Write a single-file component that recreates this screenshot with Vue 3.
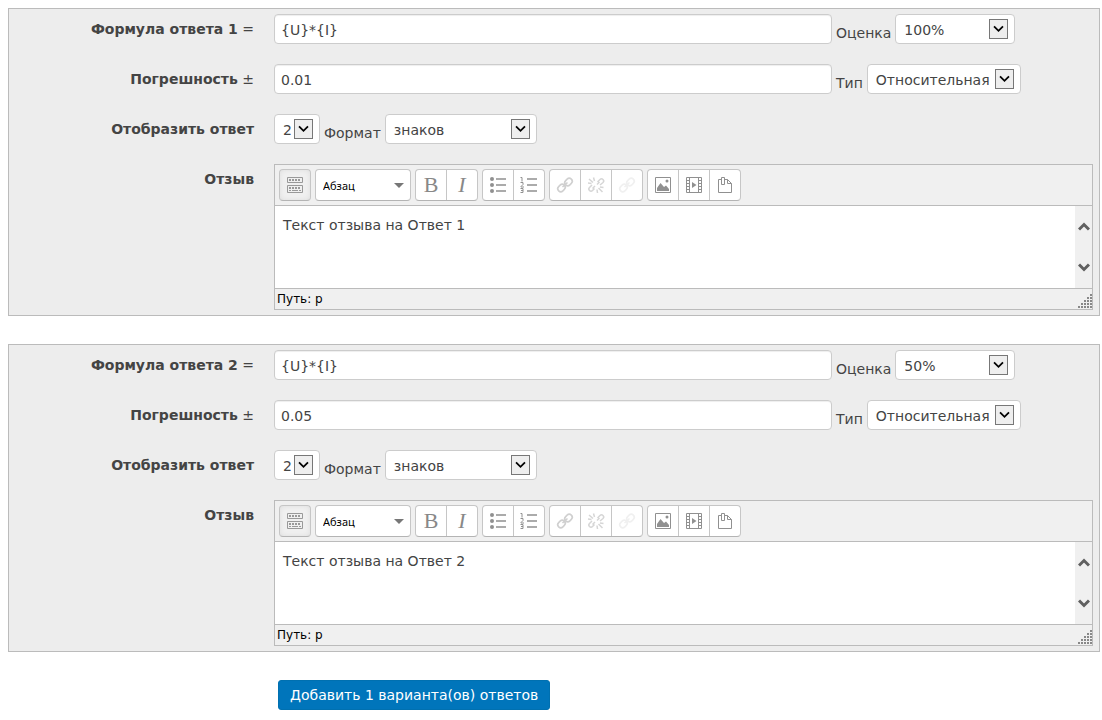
<script setup>
import { reactive } from 'vue'

const answers = reactive([
  { id: 1, formula: '{U}*{I}', grade: '100%', tolerance: '0.01', type: 'Относительная', digits: '2', format: 'знаков', feedback: 'Текст отзыва на Ответ 1' },
  { id: 2, formula: '{U}*{I}', grade: '50%', tolerance: '0.05', type: 'Относительная', digits: '2', format: 'знаков', feedback: 'Текст отзыва на Ответ 2' },
])

const groups = [
  [{ icon: 'bold', title: 'Полужирный' }, { icon: 'italic', title: 'Курсив' }],
  [{ icon: 'bullets', title: 'Маркированный список' }, { icon: 'numbers', title: 'Нумерованный список' }],
  [
    { icon: 'link', title: 'Вставить ссылку', disabled: true },
    { icon: 'unlink', title: 'Удалить ссылку', disabled: true },
    { icon: 'nolink', title: 'Отменить автоссылку', disabled: true },
  ],
  [{ icon: 'image', title: 'Изображение' }, { icon: 'media', title: 'Медиа' }, { icon: 'files', title: 'Файлы' }],
]

function addAnswer() {
  const id = answers.length + 1
  answers.push({ ...answers[0], id, formula: '', feedback: '' })
}
</script>

<template>
  <form class="page" @submit.prevent>
    <section v-for="a in answers" :key="a.id" class="answer">
      <div class="row">
        <label class="name" :for="'formula' + a.id"><b>Формула ответа {{ a.id }}</b> =</label>
        <div class="fields">
          <input :id="'formula' + a.id" v-model="a.formula" class="text" type="text" />
          <label class="side" :for="'grade' + a.id">Оценка</label>
          <span class="drop grade">
            <select :id="'grade' + a.id" v-model="a.grade"><option>100%</option><option>50%</option></select>
            <svg class="arrow" viewBox="0 0 19 20"><path d="M4.5 7 9.5 12 14.5 7" /></svg>
          </span>
        </div>
      </div>
      <div class="row">
        <label class="name" :for="'tolerance' + a.id"><b>Погрешность</b> ±</label>
        <div class="fields">
          <input :id="'tolerance' + a.id" v-model="a.tolerance" class="text" type="text" />
          <label class="side" :for="'type' + a.id">Тип</label>
          <span class="drop type">
            <select :id="'type' + a.id" v-model="a.type"><option>Относительная</option></select>
            <svg class="arrow" viewBox="0 0 19 20"><path d="M4.5 7 9.5 12 14.5 7" /></svg>
          </span>
        </div>
      </div>
      <div class="row">
        <label class="name" :for="'digits' + a.id"><b>Отобразить ответ</b></label>
        <div class="fields">
          <span class="drop digits">
            <select :id="'digits' + a.id" v-model="a.digits"><option>2</option></select>
            <svg class="arrow" viewBox="0 0 19 20"><path d="M4.5 7 9.5 12 14.5 7" /></svg>
          </span>
          <label class="side" :for="'format' + a.id">Формат</label>
          <span class="drop format">
            <select :id="'format' + a.id" v-model="a.format"><option>знаков</option></select>
            <svg class="arrow" viewBox="0 0 19 20"><path d="M4.5 7 9.5 12 14.5 7" /></svg>
          </span>
        </div>
      </div>
      <div class="row">
        <label class="name" :for="'feedback' + a.id"><b>Отзыв</b></label>
        <div class="editor">
          <div class="toolbar">
            <div class="group toggle">
              <button type="button" title="Панель инструментов">
                <svg viewBox="0 0 20 20" fill="none" stroke="#999">
                  <path d="M2.5 2.5h15v5h-15zM2.5 10.5h15v7h-15z" />
                  <path d="M4 5h12M4 13h12" stroke-width="2" stroke-dasharray="2 1" />
                  <path d="M4 15.500h2M7 15.500h6M14 15.500h2" />
                </svg>
              </button>
            </div>
            <div class="group block">
              <select aria-label="Формат абзаца"><option>Абзац</option></select>
              <svg class="caret" viewBox="0 0 10 5"><path d="M0 0h10L5 5z" fill="#777" /></svg>
            </div>
            <div v-for="(g, gi) in groups" :key="gi" class="group">
              <button v-for="b in g" :key="b.icon" type="button" :title="b.title" :disabled="b.disabled">
                <span v-if="b.icon === 'bold'" class="glyph">B</span>
                <span v-else-if="b.icon === 'italic'" class="glyph italic">I</span>
                <svg v-else viewBox="0 0 20 20" fill="none" stroke="#909090">
                  <g v-if="b.icon === 'bullets'">
                    <g fill="#909090" stroke="none"><circle cx="4" cy="4" r="2" /><circle cx="4" cy="10" r="2" /><circle cx="4" cy="16" r="2" /></g>
                    <path d="M8 4h10M8 10h10M8 16h10" stroke-width="1.500" />
                  </g>
                  <g v-else-if="b.icon === 'numbers'">
                    <path d="M8 4h10M8 10h10M8 16h10" stroke-width="1.500" />
                    <path d="M1.500 2.500H3v4M1.500 7.500h2.500v2L2 11.500v.5h3M1.500 13.500h2.500v4H1.500M2 15.500h2" />
                  </g>
                  <g v-else-if="b.icon === 'link'" stroke="#d0d0d0" stroke-width="1.600">
                    <rect x="9.500" y="4" width="8" height="6" rx="3" transform="rotate(-45 13.500 7)" />
                    <rect x="2.500" y="10" width="8" height="6" rx="3" transform="rotate(-45 6.500 13)" />
                    <path d="M7.500 12 12.500 7.500" />
                  </g>
                  <g v-else-if="b.icon === 'unlink'" stroke="#d6d6d6" stroke-width="1.500">
                    <path d="M11.500 7 14 4.500a2 2 0 0 1 3 3L14 10M8.500 13.500 6.500 15.500a2 2 0 0 1-3-3L6 10M11 9.500l2.500-2.500M6.500 13.500l2.500-2.500M3 4l4 3.500M7.500 2.500l1 3.500M2 8l3.500.5M12.500 13l4 4M11 14.500l.5 3.500M14 12l3.500.5" />
                  </g>
                  <g v-else-if="b.icon === 'nolink'" stroke="#f0f0f0" stroke-width="1.600">
                    <rect x="9.500" y="4" width="8" height="6" rx="3" transform="rotate(-45 13.500 7)" />
                    <rect x="2.500" y="10" width="8" height="6" rx="3" transform="rotate(-45 6.500 13)" />
                    <path d="M7.500 12 12.500 7.500" />
                  </g>
                  <g v-else-if="b.icon === 'image'">
                    <path d="M2.500 2.500h15v15h-15z" />
                    <path d="M4 16v-3l3.500-5L11 12l2-1.500 3 3.500v2z" fill="#909090" stroke="none" />
                    <circle cx="14" cy="6" r="1.500" fill="#909090" stroke="none" />
                  </g>
                  <g v-else-if="b.icon === 'media'">
                    <path d="M2.500 2.500h15v15h-15zM5.500 2.500v15M14.500 2.500v15M2.500 5.500h3M2.500 8.500h3M2.500 11.500h3M2.500 14.500h3M14.500 5.500h3M14.500 8.500h3M14.500 11.500h3M14.500 14.500h3" />
                    <path d="M8 7v6l4.500-3z" fill="#909090" stroke="none" />
                  </g>
                  <g v-else>
                    <path d="M6 4.500H3.500v13h13v-9l-4-4H10M12.500 4.500v4h4" />
                    <path d="M6.500 4v5.500h3v-7h-3V7" />
                  </g>
                </svg>
              </button>
            </div>
          </div>
          <div class="content">
            <textarea :id="'feedback' + a.id" v-model="a.feedback" spellcheck="false"></textarea>
            <div class="scroll" aria-hidden="true">
              <svg viewBox="0 0 12 9"><path d="M1 7.500 6 2.500 11 7.500" /></svg>
              <svg viewBox="0 0 12 9"><path d="M1 1.500 6 6.500 11 1.500" /></svg>
            </div>
          </div>
          <div class="status">
            <span>Путь: <a href="#" @click.prevent>p</a></span>
            <svg class="grip" viewBox="0 0 15 15" stroke="#888" stroke-width="2" stroke-dasharray="2 1">
              <path d="M13 1h2M10 4h5M7 7h8M4 10h11M1 13h14" />
            </svg>
          </div>
        </div>
      </div>
    </section>
    <button class="add" type="button" @click="addAnswer">Добавить 1 варианта(ов) ответов</button>
  </form>
</template>

<style>
body {
  background: #fff;
}
</style>

<style scoped>
.page {
  padding: 8px 2px 8px 8px;
  font: 14px/20px "DejaVu Sans", Verdana, sans-serif;
  color: #444;
}
.page * {
  box-sizing: border-box;
}
.answer {
  display: flex;
  flex-direction: column;
  gap: 20px;
  margin-bottom: 28px;
  padding: 5px 6px 5px 5px;
  border: 1px solid #bbb;
  background: #ededed;
}
.row {
  display: flex;
  gap: 20px;
}
.name {
  flex: 0 0 240px;
  line-height: 30px;
  text-align: right;
}
.fields {
  display: flex;
  flex: 1;
  gap: 4px;
  min-width: 0;
}
.text {
  flex: 0 1 558px;
  min-width: 0;
  height: 30px;
  padding: 1px 6px 0;
  border: 1px solid #ccc;
  border-radius: 4px;
  background: #fff;
  box-shadow: inset 0 1px 1px #eee;
  color: #444;
  font: inherit;
}
.side {
  height: 30px;
  padding-top: 9px;
}
.drop {
  position: relative;
  height: 30px;
}
.drop select {
  display: block;
  width: 100%;
  height: 30px;
  padding: 1px 0 0 8px;
  border: 1px solid #ccc;
  border-radius: 4px;
  background: #fff;
  color: #444;
  font: inherit;
  appearance: none;
}
.grade {
  width: 120px;
}
.type {
  width: 154px;
}
.digits {
  width: 46px;
}
.format {
  width: 152px;
}
.arrow {
  position: absolute;
  top: 5px;
  right: 7px;
  width: 19px;
  height: 20px;
  border: 1px solid #777;
  background: #eee;
  fill: none;
  stroke: #000;
  stroke-width: 2;
  pointer-events: none;
}
.editor {
  flex: 1;
  min-width: 0;
  border: 1px solid #bbb;
  background: #f0f0f0;
}
.toolbar {
  display: flex;
  flex-wrap: wrap;
  gap: 4px;
  padding: 4px;
}
.group {
  position: relative;
  display: flex;
  height: 32px;
  border: 1px solid #c6c6c6;
  border-bottom-color: #b4b4b4;
  border-radius: 4px;
  background: #fff;
  overflow: hidden;
}
.group button {
  display: flex;
  align-items: center;
  justify-content: center;
  width: 30px;
  padding: 0;
  border: 0;
  background: none;
}
.group button + button {
  width: 31px;
  border-left: 1px solid #c6c6c6;
}
.toggle {
  width: 32px;
  background: #f0f0f0;
  box-shadow: inset 0 0 5px #ddd;
}
.group button svg {
  width: 20px;
  height: 20px;
}
.block {
  width: 96px;
}
.block select {
  width: 100%;
  padding: 0 7px;
  border: 0;
  background: none;
  color: #000;
  font: 11px "Noto Sans", sans-serif;
  appearance: none;
}
.caret {
  position: absolute;
  top: 13px;
  right: 6px;
  width: 10px;
  height: 5px;
  pointer-events: none;
}
.glyph {
  color: #888;
  font: 22px/30px "Liberation Serif", serif;
}
.italic {
  font-style: italic;
}
.content {
  display: flex;
  height: 84px;
  border: solid #bbb;
  border-width: 1px 0;
  background: #fff;
}
.content textarea {
  flex: 1;
  min-width: 0;
  padding: 9px 8px;
  border: 0;
  background: #fff;
  color: #444;
  font: inherit;
  resize: none;
  overflow: hidden;
}
.scroll {
  display: flex;
  flex-direction: column;
  align-items: center;
  justify-content: space-between;
  width: 17px;
  padding: 16px 0;
  background: #f0f0f0;
}
.scroll svg {
  width: 12px;
  height: 9px;
  fill: none;
  stroke: #606060;
  stroke-width: 3;
}
.status {
  display: flex;
  align-items: flex-end;
  justify-content: space-between;
  padding-left: 2px;
  color: #000;
  font-size: 12px;
}
.status a {
  color: #000;
  text-decoration: none;
}
.grip {
  width: 15px;
  height: 15px;
}
.add {
  display: block;
  height: 30px;
  margin-left: 270px;
  padding: 0 11px;
  border: 1px solid #0070b0;
  border-radius: 3px;
  background: #0075bb;
  color: #fff;
  font: inherit;
}
</style>
